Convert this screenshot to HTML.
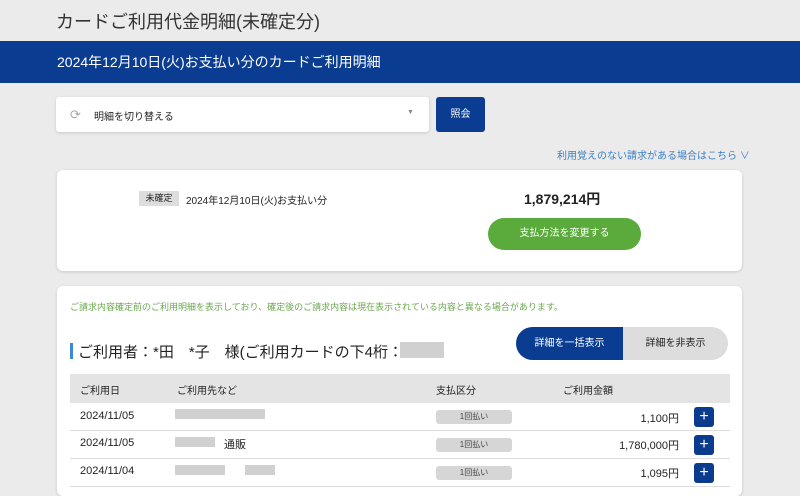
<!DOCTYPE html>
<html><head><meta charset="utf-8"><style>
*{box-sizing:border-box;margin:0;padding:0}
body{width:800px;height:484px;overflow:hidden;background:#ebebeb;font-family:"Liberation Sans","Noto Sans CJK JP",sans-serif;color:#222;position:relative}
.a{position:absolute}
.card{background:#fff;border-radius:6px;box-shadow:0 1px 3px rgba(0,0,0,.15)}
.blur{background:#d0d0d0;position:absolute;height:10px}
.pill{position:absolute;left:436px;width:76px;height:14px;background:#d6d6d6;border-radius:3px;font-size:8px;text-align:center;line-height:14px;color:#444}
.plus{position:absolute;left:694px;width:20px;height:20px;background:#0a3b8c;color:#fff;border-radius:3px;text-align:center;line-height:19px;font-size:16px}
.row{position:absolute;left:70px;width:660px;height:28px;border-bottom:1px solid #ddd;font-size:11px;background:#fff}
</style></head><body>
<div class="a" style="left:56px;top:8px;font-size:18px;color:#333">カードご利用代金明細(未確定分)</div>
<div class="a" style="left:0;top:41px;width:800px;height:42px;background:#0a3d91;color:#fff;font-size:14px;line-height:42px;padding-left:57px">2024年12月10日(火)お支払い分のカードご利用明細</div>
<div class="a card" style="left:56px;top:97px;width:373px;height:35px;border-radius:3px"></div>
<div class="a" style="left:70px;top:107px;font-size:13px;color:#aaa">⟳</div>
<div class="a" style="left:94px;top:108px;font-size:10px">明細を切り替える</div>
<div class="a" style="left:407px;top:109px;font-size:7px;color:#888">▼</div>
<div class="a" style="left:436px;top:97px;width:49px;height:35px;background:#0a3d91;border-radius:3px;color:#fff;font-size:10px;text-align:center;line-height:35px">照会</div>
<div class="a" style="left:557px;top:147px;font-size:10px;color:#3a7fc4">利用覚えのない請求がある場合はこちら ∨</div>
<div class="a card" style="left:57px;top:170px;width:685px;height:101px"></div>
<div class="a" style="left:139px;top:191px;width:40px;height:15px;background:#ddd;font-size:9px;text-align:center;line-height:15px">未確定</div>
<div class="a" style="left:186px;top:192px;font-size:10px">2024年12月10日(火)お支払い分</div>
<div class="a" style="left:524px;top:189px;font-size:14px;font-weight:bold">1,879,214円</div>
<div class="a" style="left:488px;top:218px;width:153px;height:32px;background:#5aab3c;border-radius:16px;color:#fff;font-size:10px;text-align:center;line-height:32px">支払方法を変更する</div>
<div class="a card" style="left:57px;top:286px;width:685px;height:210px"></div>
<div class="a" style="left:70px;top:300px;font-size:9px;color:#6aa84f">ご請求内容確定前のご利用明細を表示しており、確定後のご請求内容は現在表示されている内容と異なる場合があります。</div>
<div class="a" style="left:70px;top:343px;width:3px;height:16px;background:#3a8ad8"></div>
<div class="a" style="left:78px;top:341px;font-size:15px">ご利用者：*田　*子　様(ご利用カードの下4桁：</div>
<div class="blur" style="left:400px;top:342px;width:44px;height:16px"></div>
<div class="a" style="left:516px;top:327px;width:212px;height:33px;border-radius:17px;background:#ddd"></div>
<div class="a" style="left:516px;top:327px;width:107px;height:33px;border-radius:17px 0 0 17px;background:#0a3d91;color:#fff;font-size:10px;text-align:center;line-height:33px">詳細を一括表示</div>
<div class="a" style="left:623px;top:327px;width:105px;height:33px;font-size:10px;text-align:center;line-height:33px">詳細を非表示</div>
<div class="a" style="left:70px;top:374px;width:660px;height:29px;background:#e4e4e4;font-size:10px"></div>
<div class="a" style="left:80px;top:382px;font-size:10px">ご利用日</div>
<div class="a" style="left:177px;top:382px;font-size:10px">ご利用先など</div>
<div class="a" style="left:436px;top:382px;font-size:10px">支払区分</div>
<div class="a" style="left:563px;top:382px;font-size:10px">ご利用金額</div>
<div class="row" style="top:403px"></div>
<div class="row" style="top:431px"></div>
<div class="row" style="top:459px"></div>
<div class="a" style="left:80px;top:410px;font-size:11px">2024/11/05</div>
<div class="blur" style="left:175px;top:409px;width:90px"></div>
<div class="pill" style="top:410px">1回払い</div>
<div class="a" style="left:600px;top:410px;width:79px;text-align:right;font-size:11px">1,100円</div>
<div class="plus" style="top:407px">+</div>
<div class="a" style="left:80px;top:437px;font-size:11px">2024/11/05</div>
<div class="blur" style="left:175px;top:437px;width:40px"></div>
<div class="a" style="left:224px;top:436px;font-size:11px">通販</div>
<div class="pill" style="top:438px">1回払い</div>
<div class="a" style="left:580px;top:437px;width:99px;text-align:right;font-size:11px">1,780,000円</div>
<div class="plus" style="top:435px">+</div>
<div class="a" style="left:80px;top:465px;font-size:11px">2024/11/04</div>
<div class="blur" style="left:175px;top:465px;width:50px"></div>
<div class="blur" style="left:245px;top:465px;width:30px"></div>
<div class="pill" style="top:466px">1回払い</div>
<div class="a" style="left:600px;top:465px;width:79px;text-align:right;font-size:11px">1,095円</div>
<div class="plus" style="top:463px">+</div>
</body></html>
